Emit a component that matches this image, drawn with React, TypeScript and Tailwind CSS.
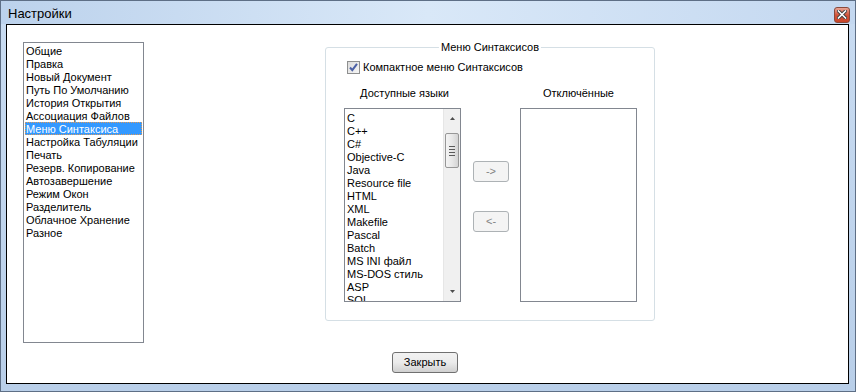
import React from 'react';

const menuItems = [
  'Общие',
  'Правка',
  'Новый Документ',
  'Путь По Умолчанию',
  'История Открытия',
  'Ассоциация Файлов',
  'Меню Синтаксиса',
  'Настройка Табуляции',
  'Печать',
  'Резерв. Копирование',
  'Автозавершение',
  'Режим Окон',
  'Разделитель',
  'Облачное Хранение',
  'Разное',
];

const languages = [
  'C',
  'C++',
  'C#',
  'Objective-C',
  'Java',
  'Resource file',
  'HTML',
  'XML',
  'Makefile',
  'Pascal',
  'Batch',
  'MS INI файл',
  'MS-DOS стиль',
  'ASP',
  'SQL',
];

const font = { fontFamily: '"Liberation Sans", Arial, sans-serif' };

const CloseIcon = () => (
  <svg width="10" height="9" viewBox="0 0 10 9">
    <path d="M1.5 1 L8.5 8 M8.5 1 L1.5 8" stroke="#3b3b3b" strokeWidth="3.4" strokeLinecap="square" />
    <path d="M1.5 1 L8.5 8 M8.5 1 L1.5 8" stroke="#ffffff" strokeWidth="1.6" strokeLinecap="square" />
  </svg>
);

const Checkbox = () => (
  <div className="w-[13px] h-[13px] border border-[#8e8f8f] bg-gradient-to-br from-[#dcdcdc] to-[#f6f6f6] p-[1px]">
    <svg width="11" height="11" viewBox="0 0 11 11" className="block -mt-[1px] -ml-[1px]">
      <path d="M2 5.5 L4.3 8.2 L9 1.8" fill="none" stroke="#4c61a6" strokeWidth="2" />
    </svg>
  </div>
);

const Scrollbar = () => (
  <div className="w-[17px] h-full bg-[#f0f0f0] border-l border-[#e6e6e6] flex flex-col items-center">
    <div className="h-[17px] w-full flex items-center justify-center pt-[2px]">
      <svg width="5" height="3" viewBox="0 0 5 3">
        <path d="M0 3 L2.5 0 L5 3 Z" fill="#4d4d4d" />
      </svg>
    </div>
    <div className="mt-[7px] w-[14px] h-[35px] rounded-[2px] border border-[#979797] bg-gradient-to-r from-[#f4f4f4] via-[#e8e8e8] to-[#d4d4d4] flex flex-col items-center justify-center gap-[2px]">
      <div className="w-[6px] h-[1px] bg-[#5a5a5a]" />
      <div className="w-[6px] h-[1px] bg-[#5a5a5a]" />
      <div className="w-[6px] h-[1px] bg-[#5a5a5a]" />
      <div className="w-[6px] h-[1px] bg-[#5a5a5a]" />
    </div>
    <div className="flex-1" />
    <div className="h-[17px] w-full flex items-center justify-center pb-[2px]">
      <svg width="5" height="3" viewBox="0 0 5 3">
        <path d="M0 0 L2.5 3 L5 0 Z" fill="#4d4d4d" />
      </svg>
    </div>
  </div>
);

const ArrowButton = ({ label }: { label: string }) => (
  <div className="w-[36px] h-[21px] rounded-[3px] border border-[#adb2b5] bg-[#f4f4f4] flex items-center justify-center text-[11px] text-[#838383]">
    {label}
  </div>
);

export default function App() {
  return (
    <div
      className="w-[856px] h-[392px] flex flex-col bg-gradient-to-b from-[#c9dcf2] to-[#b9cfe9] border border-[#5e6f86] text-black text-[11px] leading-[13px]"
      style={font}
    >
      {/* title bar */}
      <div className="h-[23px] flex items-center justify-between pl-[7px] pr-[5px] bg-gradient-to-r from-[#bcd2ec] via-[#d9e8f8] to-[#c4d8f0]">
        <span className="text-[13px] text-black pt-[1px]">Настройки</span>
        <div className="w-[16px] h-[16px] mt-[4px] rounded-[3px] border border-[#8a4a3c] bg-gradient-to-b from-[#e8a596] via-[#d2543a] to-[#c8452a] flex items-center justify-center">
          <CloseIcon />
        </div>
      </div>

      {/* client area */}
      <div className="ml-[5px] mr-[6px] h-[360px] border border-black bg-white flex flex-col">
        <div className="flex pl-[16px] pt-[17px]">
          {/* settings menu */}
          <div className="w-[121px] h-[301px] border border-[#828790] bg-white p-[1px]">
            {menuItems.map((item) =>
              item === 'Меню Синтаксиса' ? (
                <div
                  key={item}
                  className="h-[13px] leading-[12px] bg-[#3399ff] text-white border border-dotted border-[#e09a57] whitespace-nowrap"
                >
                  {item}
                </div>
              ) : (
                <div key={item} className="h-[13px] leading-[14px] pl-[1px] whitespace-nowrap">
                  {item}
                </div>
              )
            )}
          </div>

          {/* syntax menu group */}
          <div className="relative ml-[181px] mt-[5px] w-[330px] h-[274px] border border-[#d5dfe5] rounded-[3px]">
            <span className="absolute -top-[7px] left-1/2 -translate-x-1/2 bg-white px-[2px] whitespace-nowrap">
              Меню Синтаксисов
            </span>

            <div className="flex items-center gap-[3px] pl-[21px] pt-[13px]">
              <Checkbox />
              <span>Компактное меню Синтаксисов</span>
            </div>

            <div className="flex pl-[18px] pt-[13px]">
              <div className="w-[117px] flex flex-col">
                <div className="text-center pl-[4px]">Доступные языки</div>
                <div className="mt-[8px] h-[194px] border border-[#828790] flex">
                  <div className="flex-1 pl-[2px] pt-[2px] overflow-hidden">
                    {languages.map((lang) => (
                      <div key={lang} className="h-[13px] leading-[14px] whitespace-nowrap">
                        {lang}
                      </div>
                    ))}
                  </div>
                  <Scrollbar />
                </div>
              </div>

              <div className="ml-[12px] pt-[74px] flex flex-col gap-[29px]">
                <ArrowButton label="->" />
                <ArrowButton label="<-" />
              </div>

              <div className="ml-[11px] w-[117px] flex flex-col">
                <div className="text-center">Отключённые</div>
                <div className="mt-[8px] h-[194px] border border-[#828790]" />
              </div>
            </div>
          </div>
        </div>

        <div className="pl-[385px] pt-[9px]">
          <button className="w-[66px] h-[21px] rounded-[3px] border border-[#707070] bg-gradient-to-b from-[#f2f2f2] via-[#ebebeb] to-[#d0d0d0] text-[11px] text-black">
            Закрыть
          </button>
        </div>
      </div>
    </div>
  );
}
